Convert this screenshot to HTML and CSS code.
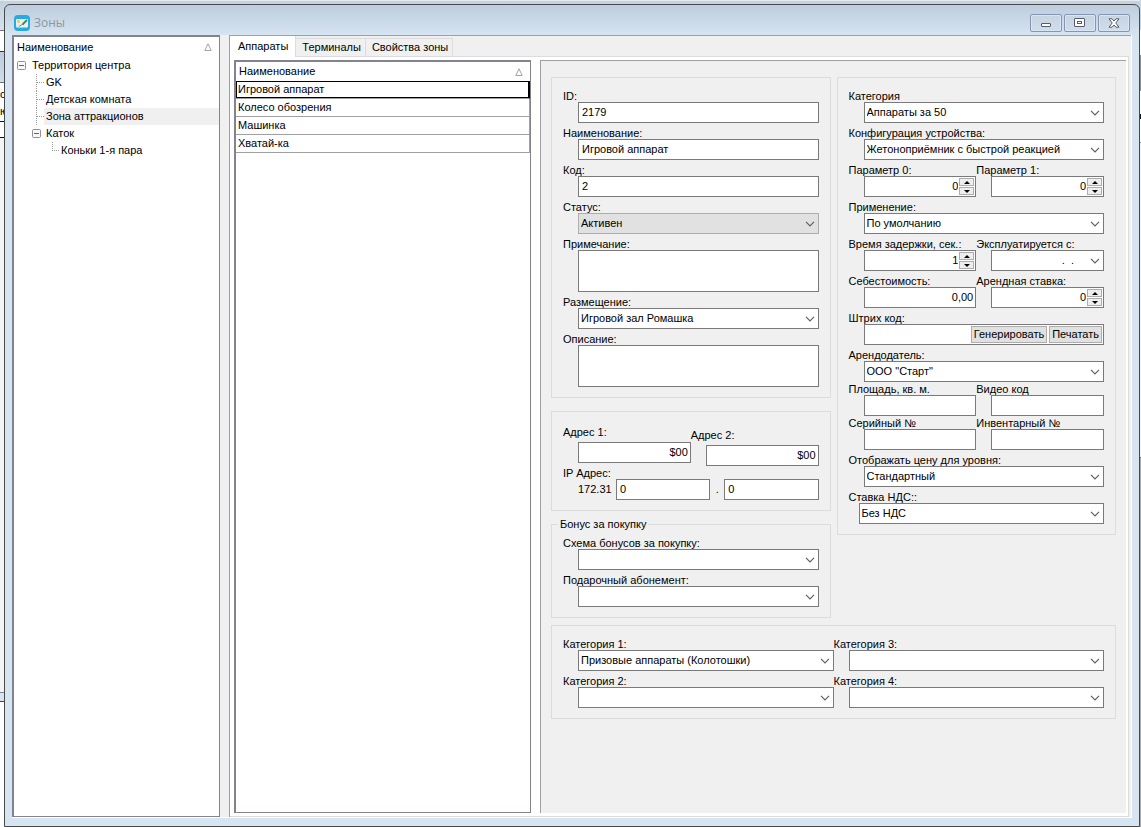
FILE: index.html
```html
<!DOCTYPE html>
<html lang="ru">
<head>
<meta charset="utf-8">
<title>Зоны</title>
<link rel="stylesheet" href="styles.css">
</head>
<body>
<svg class="defs" aria-hidden="true">
  <symbol id="chevron" viewBox="0 0 10 6"><path d="M1 .8 5 4.8 9 .8" fill="none" stroke="#606060" stroke-width="1.2"/></symbol>
  <symbol id="sort" viewBox="0 0 8 8"><path d="M4 .8.8 7.5H7.2Z" fill="none" stroke="#8c8c8c" stroke-width=".8"/></symbol>
  <symbol id="up" viewBox="0 0 6 3"><path d="M0 3 3 0 6 3Z"/></symbol>
  <symbol id="down" viewBox="0 0 6 3"><path d="M0 0 3 3 6 0Z"/></symbol>
  <symbol id="minus" viewBox="0 0 9 9"><rect x=".5" y=".5" width="8" height="8" rx="1" fill="#f8f8f8" stroke="#919191"/><path d="M2 4.5H7" stroke="#4b63a7"/></symbol>
</svg>
<div class="desktop">
  <div class="behind" aria-hidden="true"><span>с</span><span>ю</span></div>
  <main class="window">
    <header class="titlebar">
      <svg class="app-icon" viewBox="0 0 16 16" aria-hidden="true"><rect width="16" height="16" rx="4" fill="#27a9e1"/><rect x="2" y="4" width="12" height="8.500" rx="1" fill="#e9f3e8"/><path d="M3 5H6V8H3Z" fill="#f3cf69"/><path d="M2 12V10L7 9 8 12.500Z" fill="#d3ebf4"/><path d="M5 11.500 8 9.500 10 9" stroke="#e56d4c" fill="none"/><path d="M8.500 9.500 13 5" stroke="#239273" stroke-width="1.800"/></svg>
      <h1>Зоны</h1>
      <div class="caption">
        <button type="button" aria-label="Свернуть"><svg viewBox="0 0 12 10"><rect x="1.500" y="5.500" width="9" height="3" rx=".5" fill="#fff" stroke="#555b6e"/></svg></button>
        <button type="button" aria-label="Развернуть"><svg viewBox="0 0 12 10"><rect x=".5" y=".5" width="10" height="8" rx=".5" fill="#fff" stroke="#555b6e"/><rect x="3.500" y="3.500" width="4" height="2" fill="#fff" stroke="#555b6e"/></svg></button>
        <button type="button" aria-label="Закрыть"><svg viewBox="0 0 12 10"><path d="M1 .8H4L6 3 8 .8H11L7.800 5 11 9.200H8L6 7 4 9.200H1L4.200 5Z" fill="#fff" stroke="#555b6e"/></svg></button>
      </div>
    </header>
    <div class="client">
      <nav class="tree">
        <div class="list-head"><span>Наименование</span><svg class="sort"><use href="#sort"/></svg></div>
        <ul>
          <li><div class="node"><button class="toggle" type="button" aria-label="Свернуть ветвь"><svg><use href="#minus"/></svg></button><span>Территория центра</span></div>
            <ul class="branch">
              <li><div class="node"><i></i><span>GK</span></div></li>
              <li><div class="node"><i></i><span>Детская комната</span></div></li>
              <li><div class="node selected"><i></i><span>Зона аттракционов</span></div></li>
              <li><div class="node"><button class="toggle" type="button" aria-label="Свернуть ветвь"><svg><use href="#minus"/></svg></button><span>Каток</span></div>
                <ul class="leaf"><li><div class="node"><i></i><span>Коньки 1-я пара</span></div></li></ul>
              </li>
            </ul>
          </li>
        </ul>
      </nav>
      <section class="pages">
        <div class="tabs" role="tablist">
          <button class="tab active" type="button" role="tab" aria-selected="true">Аппараты</button>
          <button class="tab" type="button" role="tab">Терминалы</button>
          <button class="tab" type="button" role="tab">Свойства зоны</button>
        </div>
        <div class="page">
          <div class="grid-box">
            <table>
              <thead><tr><th><div class="list-head"><span>Наименование</span><svg class="sort"><use href="#sort"/></svg></div></th></tr></thead>
              <tbody>
                <tr class="current"><td>Игровой аппарат</td></tr>
                <tr><td>Колесо обозрения</td></tr>
                <tr><td>Машинка</td></tr>
                <tr><td>Хватай-ка</td></tr>
              </tbody>
            </table>
          </div>
          <form class="form">
            <div class="column">
              <div class="group">
                <div class="field"><label for="id">ID:</label><input id="id" value="2179"></div>
                <div class="field"><label for="name">Наименование:</label><input id="name" value="Игровой аппарат"></div>
                <div class="field"><label for="code">Код:</label><input id="code" value="2"></div>
                <div class="field"><label for="status">Статус:</label><div class="combo"><select id="status" disabled><option>Активен</option></select><svg><use href="#chevron"/></svg></div></div>
                <div class="field"><label for="note">Примечание:</label><textarea id="note"></textarea></div>
                <div class="field"><label for="place">Размещение:</label><div class="combo"><select id="place"><option>Игровой зал Ромашка</option></select><svg><use href="#chevron"/></svg></div></div>
                <div class="field"><label for="descr">Описание:</label><textarea id="descr"></textarea></div>
              </div>
              <div class="group address">
                <div class="pair">
                  <div class="field"><label for="a1">Адрес 1:</label><input id="a1" class="num" value="$00"></div>
                  <div class="field lower"><label for="a2">Адрес 2:</label><input id="a2" class="num" value="$00"></div>
                </div>
                <div class="field tight"><label for="ip3">IP Адрес:</label>
                  <div class="ip"><span>172.31</span><input id="ip3" value="0"><span class="dot">.</span><input aria-label="IP Адрес, последняя часть" value="0"></div>
                </div>
              </div>
              <fieldset>
                <legend>Бонус за покупку</legend>
                <div class="fieldset-body">
                  <div class="field"><label for="scheme">Схема бонусов за покупку:</label><div class="combo"><select id="scheme"><option></option></select><svg><use href="#chevron"/></svg></div></div>
                  <div class="field"><label for="gift">Подарочный абонемент:</label><div class="combo"><select id="gift"><option></option></select><svg><use href="#chevron"/></svg></div></div>
                </div>
              </fieldset>
            </div>
            <div class="column">
              <div class="group">
                <div class="field"><label for="cat">Категория</label><div class="combo"><select id="cat"><option>Аппараты за 50</option></select><svg><use href="#chevron"/></svg></div></div>
                <div class="field"><label for="conf">Конфигурация устройства:</label><div class="combo"><select id="conf"><option>Жетоноприёмник с быстрой реакцией</option></select><svg><use href="#chevron"/></svg></div></div>
                <div class="pair">
                  <div class="field"><label for="p0">Параметр 0:</label><div class="spin"><input id="p0" value="0"><div class="steps"><button type="button" aria-label="Больше"><svg><use href="#up"/></svg></button><button type="button" aria-label="Меньше"><svg><use href="#down"/></svg></button></div></div></div>
                  <div class="field"><label for="p1">Параметр 1:</label><div class="spin"><input id="p1" value="0"><div class="steps"><button type="button" aria-label="Больше"><svg><use href="#up"/></svg></button><button type="button" aria-label="Меньше"><svg><use href="#down"/></svg></button></div></div></div>
                </div>
                <div class="field"><label for="use">Применение:</label><div class="combo"><select id="use"><option>По умолчанию</option></select><svg><use href="#chevron"/></svg></div></div>
                <div class="pair">
                  <div class="field"><label for="delay">Время задержки, сек.:</label><div class="spin"><input id="delay" value="1"><div class="steps"><button type="button" aria-label="Больше"><svg><use href="#up"/></svg></button><button type="button" aria-label="Меньше"><svg><use href="#down"/></svg></button></div></div></div>
                  <div class="field"><label for="since">Эксплуатируется с:</label><div class="combo"><input id="since" class="date" value=".&nbsp;&nbsp;."><svg><use href="#chevron"/></svg></div></div>
                </div>
                <div class="pair">
                  <div class="field"><label for="cost">Себестоимость:</label><input id="cost" class="num" value="0,00"></div>
                  <div class="field"><label for="rent">Арендная ставка:</label><div class="spin"><input id="rent" value="0"><div class="steps"><button type="button" aria-label="Больше"><svg><use href="#up"/></svg></button><button type="button" aria-label="Меньше"><svg><use href="#down"/></svg></button></div></div></div>
                </div>
                <div class="field"><label for="bar">Штрих код:</label><div class="barcode"><input id="bar"><button type="button">Генерировать</button><button type="button">Печатать</button></div></div>
                <div class="field"><label for="owner">Арендодатель:</label><div class="combo"><select id="owner"><option>ООО "Старт"</option></select><svg><use href="#chevron"/></svg></div></div>
                <div class="pair">
                  <div class="field tight"><label for="area">Площадь, кв. м.</label><input id="area"></div>
                  <div class="field tight"><label for="video">Видео код</label><input id="video"></div>
                </div>
                <div class="pair">
                  <div class="field tight"><label for="serial">Серийный №</label><input id="serial"></div>
                  <div class="field tight"><label for="inv">Инвентарный №</label><input id="inv"></div>
                </div>
                <div class="field"><label for="level">Отображать цену для уровня:</label><div class="combo"><select id="level"><option>Стандартный</option></select><svg><use href="#chevron"/></svg></div></div>
                <div class="field wide"><label for="vat">Ставка НДС::</label><div class="combo"><select id="vat"><option>Без НДС</option></select><svg><use href="#chevron"/></svg></div></div>
              </div>
            </div>
            <div class="group categories">
              <div class="field"><label for="c1">Категория 1:</label><div class="combo"><select id="c1"><option>Призовые аппараты (Колотошки)</option></select><svg><use href="#chevron"/></svg></div></div>
              <div class="field"><label for="c3">Категория 3:</label><div class="combo"><select id="c3"><option></option></select><svg><use href="#chevron"/></svg></div></div>
              <div class="field"><label for="c2">Категория 2:</label><div class="combo"><select id="c2"><option></option></select><svg><use href="#chevron"/></svg></div></div>
              <div class="field"><label for="c4">Категория 4:</label><div class="combo"><select id="c4"><option></option></select><svg><use href="#chevron"/></svg></div></div>
            </div>
          </form>
        </div>
      </section>
    </div>
  </main>
  <div class="behind behind-right" aria-hidden="true"></div>
</div>
</body>
</html>
```
FILE: styles.css
```css
* { box-sizing: border-box; }
body { margin: 0; }
body, input, select, textarea, button {
  font: 11px/13px "Liberation Sans", Arial, sans-serif;
  color: #000;
}
button { padding: 0; margin: 0; }
svg { display: block; }
ul { list-style: none; margin: 0; padding: 0; }
.defs { position: absolute; width: 0; height: 0; }

.desktop {
  display: grid;
  grid-template-columns: 4px minmax(0, 1fr) 1px;
  min-height: 100vh;
  background: linear-gradient(#e4ebf2 1px, #c4d1de 1px, #c9d6e3 12px);
}
.behind {
  overflow: hidden;
  padding-top: 86px;
  background: linear-gradient(#dde5ed 1px, #c3d0dd 1px, #d4e1ee 30px, #777 30px, #777 31px, #fff 31px, #fff 51px, #333 51px, #333 52px, #bccbdd 52px, #d0ddeb 82px, #777 82px, #777 83px, #fff 83px, #fff 121px, #111 121px, #111 122px, #fff 122px, #fff 137px, #111 137px, #111 138px, #f4f4f4 138px, #f4f4f4 692px, #7c8294 692px, #7c8294 693px, #d7e4f1 693px, #d7e4f1 701px, #444 701px, #444 702px, #fff 702px);
}
.behind span { display: block; line-height: 17px; }
.behind-right {
  background: linear-gradient(#c9d6e3 30px, #fff 30px, #fff 55px, #8d8d8d 55px, #8d8d8d 91px, #fff 91px, #fff 114px, #111 114px, #111 119px, #fff 119px, #fff 142px, #999 142px, #999 143px, #f0f0f0 143px, #f0f0f0 457px, #777 457px, #777 458px, #aaa 458px);
}
.window {
  display: flex;
  flex-direction: column;
  margin-top: 4px;
  padding: 0 7px 8px;
  border: 1px solid #4a4a4a;
  border-radius: 6px 6px 0 0;
  background: linear-gradient(#bccddd, #d7e4f1 30px);
}
.titlebar { display: flex; align-items: center; height: 30px; padding: 5px 2px 0; }
.app-icon { width: 16px; height: 16px; }
h1 {
  flex: 1;
  margin: 0 0 0 4px;
  font: 12px/16px "Open Sans", "Noto Sans", sans-serif;
  color: #8f969d;
}
.caption { display: flex; gap: 2px; }
.caption button {
  display: grid;
  place-items: center;
  width: 32px;
  height: 18px;
  border: 1px solid #8794b5;
  border-radius: 2px;
  background: linear-gradient(#c6d4e3, #d0ddeb);
  box-shadow: inset 0 0 0 1px #d9e5f2;
}
.caption svg { width: 12px; height: 10px; }

.client {
  flex: 1;
  display: grid;
  grid-template-columns: 208px minmax(0, 1fr);
  gap: 9px;
  background: #f0f0f0;
  border-right: 1px solid #fff;
  border-bottom: 1px solid #fff;
}
.tree, .grid-box {
  background: #fff;
  border: solid #838390;
  border-width: 2px 1px 1px 2px;
}
.list-head { display: flex; justify-content: space-between; align-items: center; height: 19px; padding: 0 7px 0 3px; }
.sort { width: 8px; height: 8px; }
.tree .list-head { height: 20px; }
.branch { padding-left: 22px; }
.branch > li { border-left: 1px dotted #999; }
.branch > li:last-child { border-left-color: transparent; }
.leaf { padding-left: 15px; }
.node { display: flex; align-items: center; height: 17px; }
.toggle { border: 0; background: none; margin: 0 6px 0 3px; }
.toggle svg { width: 9px; height: 9px; }
.branch .toggle { margin: 0 5px 0 -5px; }
.node i { width: 7px; border-top: 1px dotted #999; }
.node i + span { flex: 1; padding-left: 2px; line-height: 17px; }
.leaf .node i { align-self: flex-start; height: 9px; border-top: 0; border-left: 1px dotted #999; border-bottom: 1px dotted #999; }
.selected span { background: #f0f0f0; }

.pages { display: flex; flex-direction: column; border: solid #a0a0a0; border-width: 1px 0 0 1px; padding: 0 2px 0 0; }
.tabs { display: flex; align-items: flex-end; height: 21px; box-shadow: inset 0 -1px #dcdcdc; }
.tab { height: 19px; padding: 0 4px 0 6px; border: 1px solid #dcdcdc; border-left: 0; background: #f0f0f0; }
.tab.active { height: 21px; padding: 0 7px 0 8px; border-width: 0 1px 0 0; background: #fff; }
.page {
  flex: 1;
  display: grid;
  grid-template-columns: 297px minmax(0, 1fr);
  gap: 9px;
  padding: 3px 2px 3px 4px;
  background: #fff;
  border: solid #dcdcdc;
  border-width: 0 1px 1px 0;
}
table { width: 100%; border-spacing: 0; }
th, td { padding: 0; font-weight: normal; text-align: left; }
td { height: 18px; padding-left: 2px; border: solid #a0a0a0; border-width: 0 1px 1px 0; }
.current td { border-right-color: #000; box-shadow: inset 0 0 0 1px #000; }

.form {
  display: grid;
  grid-template-columns: repeat(2, minmax(0, 1fr));
  gap: 7px 6px;
  align-content: start;
  padding: 16px 10px;
  border: solid #a0a0a0;
  border-width: 1px 0 0 1px;
  background: #f0f0f0;
}
.column { display: flex; flex-direction: column; gap: 13px; }
.group { padding: 8px 11px 10px; border: 1px solid #dcdcdc; }
.address { padding-top: 10px; }
.address .pair label { padding-bottom: 4px; }
.lower { padding-top: 3px; }
.categories { grid-column: 1 / -1; }
.pair, .categories { display: grid; grid-template-columns: repeat(2, minmax(0, 1fr)); }
.field { padding-left: 15px; }
.wide { padding-left: 10px; }
.field > label { display: block; margin-left: -15px; padding-top: 4px; line-height: 12px; white-space: nowrap; }
.wide > label { margin-left: -10px; }
.tight > label { padding-top: 1px; }
input, select, textarea {
  display: block;
  width: 100%;
  min-width: 0;
  height: 21px;
  margin: 0;
  padding: 0 3px 1px 3px;
  border: 1px solid #7a7a7a;
  border-radius: 0;
  background: #fff;
  outline: 0;
}
textarea { height: 42px; resize: none; }
select { appearance: none; padding-left: 2px; }
select:disabled { background: #e1e1e1; border-color: #adadad; color: #000; opacity: 1; }
.num { text-align: right; padding-right: 2px; }
.combo { position: relative; }
.combo svg { position: absolute; right: 4px; top: 8px; width: 10px; height: 6px; pointer-events: none; }
.date { text-align: right; padding-right: 29px; }
.spin, .barcode { display: flex; height: 21px; border: 1px solid #7a7a7a; background: #fff; padding: 1px; }
.spin input, .barcode input { flex: 1; height: 17px; border: 0; text-align: right; padding-right: 1px; }
.steps { display: grid; gap: 1px; width: 15px; }
.steps button { display: grid; place-items: center; height: 8px; border: 1px solid #adadad; background: #eee; }
.steps svg { width: 6px; height: 3px; }
.barcode { gap: 2px; }
.barcode button { border: 1px solid #adadad; background: #e1e1e1; padding: 0 2px; }
.ip { display: grid; grid-template-columns: 38px minmax(0, 1fr) 14px minmax(0, 1fr); align-items: center; }
.dot { text-align: center; }
fieldset { min-width: 0; margin: -6px 0 0; padding: 0; border: 1px solid #dcdcdc; }
legend { margin-left: 6px; padding: 0 2px; }
.fieldset-body { padding: 2px 11px 10px; }
```
